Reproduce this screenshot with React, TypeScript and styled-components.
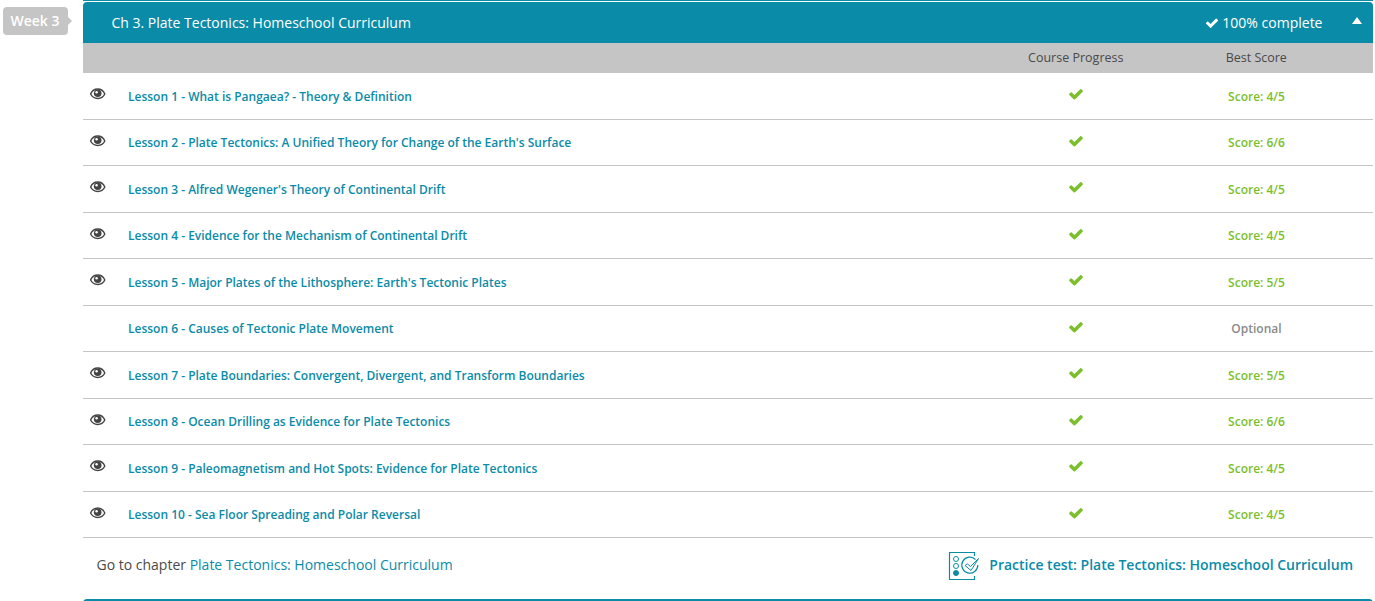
import React from 'react';
import styled, { createGlobalStyle } from 'styled-components';

const teal = '#0a8ba8';
const green = '#7bc02c';
const grey = '#c5c5c5';

const GlobalStyle = createGlobalStyle`
  * { box-sizing: border-box; }
  body { margin: 0; background: #fff; overflow: hidden; font-family: 'Open Sans', sans-serif; }
  a { color: ${teal}; text-decoration: none; }
`;

const Page = styled.div`
  display: flex;
  align-items: flex-start;
  width: 1375px;
  height: 601px;
  overflow: hidden;
`;

const WeekTag = styled.div`
  position: relative;
  width: 65px;
  height: 28px;
  margin: 7px 15px 0 3px;
  padding-right: 1px;
  border-radius: 4px;
  background: ${grey};
  color: #fff;
  font-size: 14px;
  font-weight: 600;
  line-height: 28px;
  text-align: center;
  white-space: nowrap;

  &::after {
    content: '';
    position: absolute;
    left: 65px;
    top: 10px;
    border: 4px solid transparent;
    border-left-color: ${grey};
    border-right-width: 0;
  }
`;

const Panel = styled.main`
  width: 1290px;
`;

const PreviousEdge = styled.div`
  height: 1px;
  margin-bottom: 1px;
  background: ${teal};
`;

const ChapterHeader = styled.header`
  display: flex;
  align-items: center;
  height: 41px;
  padding: 0 11px 0 28.5px;
  border-radius: 4px 4px 0 0;
  background: ${teal};
  color: #fff;
  font-size: 14px;
`;

const ChapterTitle = styled.div`
  flex: 1;
`;

const Completion = styled.div`
  display: flex;
  align-items: center;
  gap: 3.5px;
  margin-right: 29.5px;
`;

const Caret = styled.svg`
  width: 10px;
  height: 7px;
  margin-bottom: 5px;
  fill: #fff;
`;

const Columns = styled.div`
  display: grid;
  grid-template-columns: 45px 858px 180px 181px;
  align-items: center;
`;

const ColumnHeader = styled(Columns)`
  height: 30px;
  padding-bottom: 2px;
  background: ${grey};
  color: #4a4a4a;
  font-size: 12.5px;
`;

const HeadCell = styled.div`
  padding-right: 0.5px;
  text-align: center;
  &:first-child { grid-column: 3; }
`;

const LessonRow = styled(Columns)`
  height: 46px;
  border-bottom: 1px solid ${grey};
  font-size: 12px;
  font-weight: 600;
  &:nth-child(odd) { height: 47px; }
`;

const IconCell = styled.div<{ $center?: boolean }>`
  display: flex;
  align-self: start;
  justify-content: ${p => (p.$center ? 'center' : 'flex-start')};
  padding: ${p => (p.$center ? '13px 1px 0 0' : '15px 0 0 7px')};
`;

const Score = styled.div<{ $optional: boolean }>`
  color: ${p => (p.$optional ? '#8a8a8a' : green)};
  text-align: center;
`;

const CheckIcon = styled.svg<{ $size: number; $color: string }>`
  display: block;
  width: ${p => p.$size}px;
  height: ${p => p.$size}px;
  fill: ${p => p.$color};
`;

const EyeIcon = styled.svg`
  display: block;
  width: 16px;
  height: 12px;
`;

const Footer = styled.footer`
  display: flex;
  align-items: center;
  justify-content: space-between;
  height: 55px;
  margin-bottom: 6px;
  padding: 0 20px 2px 13.5px;
  color: #4a4a4a;
  font-size: 14px;
`;

const PracticeLink = styled.a`
  display: flex;
  align-items: center;
  gap: 10px;
  font-weight: 600;
`;

const TestIcon = styled.svg`
  width: 32px;
  height: 30px;
  margin: 2px -0.5px 0 0;
  fill: none;
  stroke: ${teal};
`;

const NextEdge = styled.div`
  height: 10px;
  border-radius: 4px 4px 0 0;
  background: ${teal};
`;

const Eye = () => (
  <EyeIcon viewBox="0 0 16 12">
    <path
      d="M0.6 6C2 2.7 4.8 1 7.7 1S13.4 2.7 14.8 6C13.4 9 10.6 10.5 7.7 10.5S2 9 0.6 6Z"
      fill="none"
      stroke="#444"
      strokeWidth="1.4"
      strokeLinejoin="round"
    />
    <circle cx="7.7" cy="5.2" r="3.8" fill="#444" />
    <circle cx="6.6" cy="4.2" r="1.2" fill="#fff" />
  </EyeIcon>
);

const Check = ({ size, color }: { size: number; color: string }) => (
  <CheckIcon $size={size} $color={color} viewBox="0 0 1792 1792">
    <path d="M1671 566q0 40-28 68l-724 724-136 136q-28 28-68 28t-68-28l-136-136-362-362q-28-28-28-68t28-68l136-136q28-28 68-28t68 28l294 295 656-657q28-28 68-28t68 28l136 136q28 28 28 68z" />
  </CheckIcon>
);

const lessons = [
  { title: "What is Pangaea? - Theory & Definition", score: '4/5' },
  { title: "Plate Tectonics: A Unified Theory for Change of the Earth's Surface", score: '6/6' },
  { title: "Alfred Wegener's Theory of Continental Drift", score: '4/5' },
  { title: "Evidence for the Mechanism of Continental Drift", score: '4/5' },
  { title: "Major Plates of the Lithosphere: Earth's Tectonic Plates", score: '5/5' },
  { title: "Causes of Tectonic Plate Movement", score: null },
  { title: "Plate Boundaries: Convergent, Divergent, and Transform Boundaries", score: '5/5' },
  { title: "Ocean Drilling as Evidence for Plate Tectonics", score: '6/6' },
  { title: "Paleomagnetism and Hot Spots: Evidence for Plate Tectonics", score: '4/5' },
  { title: "Sea Floor Spreading and Polar Reversal", score: '4/5' },
];

export default function App() {
  return (
    <Page>
      <GlobalStyle />
      <WeekTag>Week 3</WeekTag>
      <Panel>
        <PreviousEdge />
        <ChapterHeader>
          <ChapterTitle>Ch 3. Plate Tectonics: Homeschool Curriculum</ChapterTitle>
          <Completion>
            <Check size={14} color="#fff" />
            <span>100% complete</span>
          </Completion>
          <Caret viewBox="0 0 10 7"><path d="M5 0 10 7H0Z" /></Caret>
        </ChapterHeader>
        <ColumnHeader>
          <HeadCell>Course Progress</HeadCell>
          <HeadCell>Best Score</HeadCell>
        </ColumnHeader>
        <div>
          {lessons.map((lesson, i) => (
            <LessonRow key={lesson.title}>
              <IconCell>{lesson.score && <Eye />}</IconCell>
              <div><a href="#">{`Lesson ${i + 1} - ${lesson.title}`}</a></div>
              <IconCell $center><Check size={16} color={green} /></IconCell>
              <Score $optional={!lesson.score}>{lesson.score ? `Score: ${lesson.score}` : 'Optional'}</Score>
            </LessonRow>
          ))}
        </div>
        <Footer>
          <div>Go to chapter <a href="#">Plate Tectonics: Homeschool Curriculum</a></div>
          <PracticeLink href="#">
            <TestIcon viewBox="0 0 32 30">
              <path d="M26.5 5V1.5H1.5V28.5H26.5V25" strokeWidth="1.2" />
              <circle cx="8" cy="8" r="2.5" />
              <circle cx="8" cy="15" r="2.5" />
              <circle cx="8" cy="22" r="2.5" fill={teal} />
              <path d="M27.5 8.5A8 8 0 1 0 29.8 14" strokeWidth="1.2" />
              <path d="M17 14.5 19.5 13 22.5 15.5 30.5 7.5 23 19.5Z" />
            </TestIcon>
            <span>Practice test: Plate Tectonics: Homeschool Curriculum</span>
          </PracticeLink>
        </Footer>
        <NextEdge />
      </Panel>
    </Page>
  );
}
